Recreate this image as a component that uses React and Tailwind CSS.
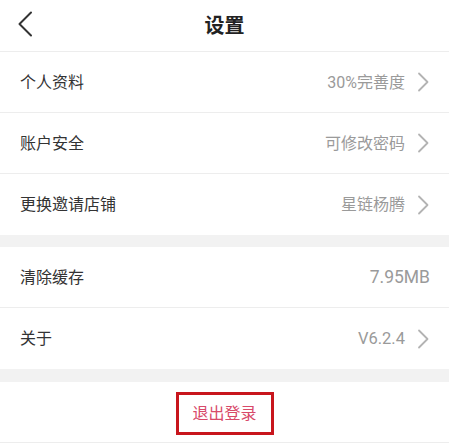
import React from 'react';

const font = { fontFamily: 'Roboto, "Noto Sans CJK SC", sans-serif' };

const Chevron = () => (
    <svg width="13" height="20" viewBox="0 0 13 20" className="ml-[12px] shrink-0">
        <path d="M2 1.5 L10.5 10 L2 18.5" fill="none" stroke="#b3b3b3" strokeWidth="1.8" strokeLinecap="round" strokeLinejoin="round" />
    </svg>
);

const Row = ({ label, value, arrow = true, last = false, valueClass = 'text-[16px]' }) => (
    <div className={`flex items-center h-[61px] pl-[20px] pr-[19px] bg-white ${last ? '' : 'border-b border-[#ededed]'}`}>
        <span className="text-[16px] text-[#333333] flex-1 pt-[1px]">{label}</span>
        <span className={`${valueClass} text-[#9a9a9a] pt-[1px]`}>{value}</span>
        {arrow && <Chevron />}
    </div>
);

export default function App() {
    return (
        <div className="w-[449px] h-[443px] bg-white overflow-hidden" style={font}>
            {/* Header */}
            <div className="relative flex items-center justify-center h-[52px] border-b border-[#ededed]">
                <svg width="18" height="26" viewBox="0 0 18 26" className="absolute left-[16px] top-[11px]">
                    <path d="M15 1.5 L3.5 13 L15 24.5" fill="none" stroke="#333333" strokeWidth="2" strokeLinecap="round" strokeLinejoin="round" />
                </svg>
                <span className="text-[20px] font-bold text-[#222222]">设置</span>
            </div>

            <Row label="个人资料" value="30%完善度" />
            <Row label="账户安全" value="可修改密码" />
            <Row label="更换邀请店铺" value="星链杨腾" last />

            <div className="h-[12px] bg-[#f2f2f2]" />

            <Row label="清除缓存" value="7.95MB" arrow={false} valueClass="text-[17.5px]" />
            <Row label="关于" value="V6.2.4" last valueClass="text-[16.5px]" />

            <div className="h-[13px] bg-[#f2f2f2]" />

            {/* Logout */}
            <div className="flex justify-center pt-[10px] h-[61px] border-b border-[#ededed]">
                <div className="w-[98px] h-[43px] border-[3px] border-[#c8161d] flex items-center justify-center">
                    <span className="text-[16px] text-[#d84a6a]">退出登录</span>
                </div>
            </div>
        </div>
    );
}
